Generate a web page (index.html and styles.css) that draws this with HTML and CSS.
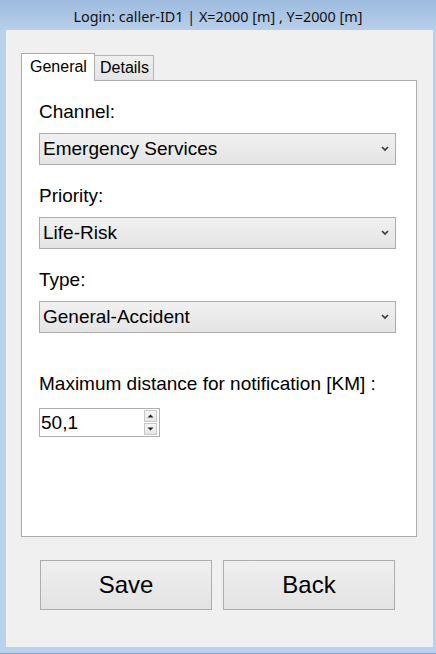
FILE: index.html
```html
<!DOCTYPE html>
<html>
<head>
<meta charset="utf-8">
<link rel="stylesheet" href="styles.css">
</head>
<body>
<div class="window">
  <div class="titlebar">Login: caller-ID1 | X=2000 [m] , Y=2000 [m]</div>
  <div class="client">
    <div class="tabs">
      <div class="tab tab-active">General</div>
      <div class="tab">Details</div>
    </div>
    <div class="panel">
      <div class="label">Channel:</div>
      <div class="combo"><span class="combo-text">Emergency Services</span><svg class="chev" width="8" height="6" viewBox="0 0 8 6"><polyline points="1,1 4,4 7,1" fill="none" stroke="#3c3c3c" stroke-width="1.7"/></svg></div>
      <div class="label">Priority:</div>
      <div class="combo"><span class="combo-text">Life-Risk</span><svg class="chev" width="8" height="6" viewBox="0 0 8 6"><polyline points="1,1 4,4 7,1" fill="none" stroke="#3c3c3c" stroke-width="1.7"/></svg></div>
      <div class="label">Type:</div>
      <div class="combo"><span class="combo-text">General-Accident</span><svg class="chev" width="8" height="6" viewBox="0 0 8 6"><polyline points="1,1 4,4 7,1" fill="none" stroke="#3c3c3c" stroke-width="1.7"/></svg></div>
      <div class="label label-far">Maximum distance for notification [KM] :</div>
      <div class="numeric">
        <span class="numeric-text">50,1</span>
        <div class="spin">
          <div class="spin-btn"><svg width="7" height="4" viewBox="0 0 7 4"><polygon points="0.5,3.5 3.5,0.5 6.5,3.5" fill="#222"/></svg></div>
          <div class="spin-btn"><svg width="7" height="4" viewBox="0 0 7 4"><polygon points="0.5,0.5 6.5,0.5 3.5,3.5" fill="#222"/></svg></div>
        </div>
      </div>
    </div>
    <div class="buttons">
      <div class="btn">Save</div>
      <div class="btn">Back</div>
    </div>
  </div>
</div>
</body>
</html>
```
FILE: styles.css
```css
html, body {
  margin: 0;
  padding: 0;
}
body {
  width: 436px;
  height: 654px;
  overflow: hidden;
  font-family: "Liberation Sans", Arial, sans-serif;
  color: #000;
}
.window {
  box-sizing: border-box;
  width: 436px;
  height: 654px;
  background: #b9d1ea;
  display: flex;
  flex-direction: column;
  padding: 0 3px 6px 6px;
  border-bottom: 1px solid #4dbbe2;
}
.titlebar {
  height: 30px;
  margin: 0 -3px 0 -6px;
  background: linear-gradient(#9dbbdf, #b7cfea);
  font-family: "Noto Sans", "Open Sans", sans-serif;
  font-size: 14.4px;
  color: #111;
  display: flex;
  align-items: center;
  justify-content: center;
  padding-top: 2px;
  box-sizing: border-box;
}
.client {
  flex: 1;
  background: #f0f0f0;
  display: flex;
  flex-direction: column;
  padding: 23px 16px 37px 15px;
}
.tabs {
  display: flex;
  align-items: flex-end;
  height: 27px;
}
.tab {
  box-sizing: border-box;
  height: 25px;
  font-size: 16px;
  padding: 0 4px 0 5px;
  border: 1px solid #b5b5b5;
  border-bottom: none;
  background: linear-gradient(#f0f0f0, #e4e4e4);
  margin-left: -1px;
  line-height: 24px;
}
.tab-active {
  position: relative;
  z-index: 1;
  height: 28px;
  margin-left: 0;
  margin-bottom: -1px;
  background: #fff;
  border-color: #acacac;
  padding: 0 8px 0 8px;
  width: 74px;
  line-height: 26px;
}
.panel {
  flex: 1;
  background: #fff;
  border: 1px solid #acacac;
  padding: 20px 20px 0 17px;
}
.label {
  font-size: 19px;
  line-height: 22px;
  margin: 20px 0 10px 0;
}
.label:first-child {
  margin-top: 0;
}
.label-far {
  margin-top: 40px;
  margin-bottom: 13px;
}
.combo {
  box-sizing: border-box;
  height: 32px;
  border: 1px solid #acacac;
  background: linear-gradient(#f1f1f1, #e4e4e4);
  display: flex;
  align-items: center;
  justify-content: space-between;
  padding: 0 6px 0 3px;
  font-size: 19px;
  line-height: 22px;
}
.chev {
  display: block;
}
.numeric {
  box-sizing: border-box;
  width: 121px;
  height: 29px;
  border: 1px solid #abadb3;
  background: #fff;
  display: flex;
  align-items: center;
  justify-content: space-between;
  padding: 0 2px 0 1px;
  font-size: 19px;
  line-height: 22px;
}
.spin {
  display: flex;
  flex-direction: column;
  gap: 1px;
}
.spin-btn {
  box-sizing: border-box;
  width: 13px;
  height: 12px;
  border: 1px solid #c9c9c9;
  background: linear-gradient(#f5f5f5, #e6e6e6);
  display: flex;
  align-items: center;
  justify-content: center;
}
.spin-btn svg {
  display: block;
}
.buttons {
  margin-top: 23px;
  display: grid;
  grid-template-columns: 1fr 1fr;
  gap: 11px;
  padding: 0 22px 0 19px;
}
.btn {
  box-sizing: border-box;
  height: 50px;
  border: 1px solid #adadad;
  background: linear-gradient(#efefef, #e3e3e3);
  display: flex;
  align-items: center;
  justify-content: center;
  font-size: 24px;
}
```
